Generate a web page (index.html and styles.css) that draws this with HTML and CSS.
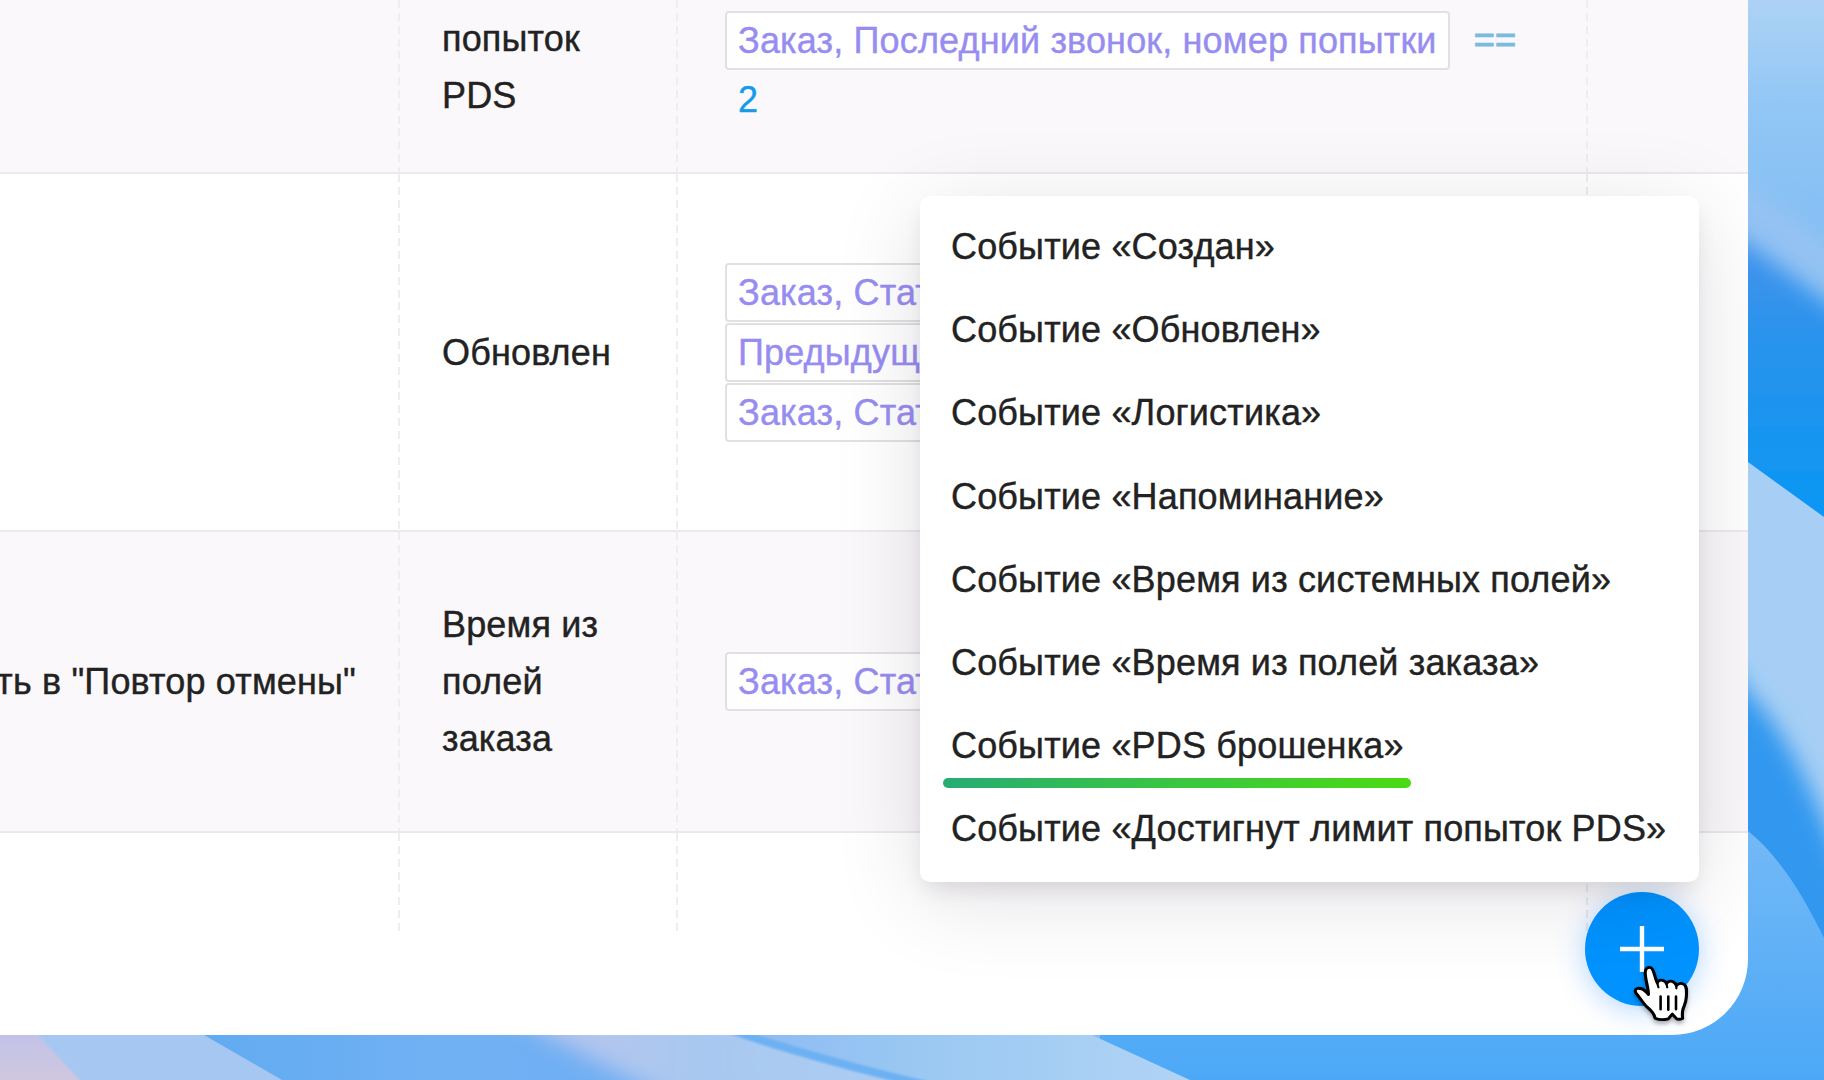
FILE: index.html
```
<!DOCTYPE html>
<html lang="ru">

<head>
    <meta charset="UTF-8" />
    <meta name="viewport" content="width=device-width, initial-scale=1.0" />
    <title>События</title>
    <link rel="stylesheet" href="styles.css">
</head>

<body>
    <svg class="wallpaper" viewBox="0 0 1824 1080" preserveAspectRatio="none">
        <defs>
            <linearGradient id="sky" x1="0" y1="0" x2="0" y2="1">
                <stop offset="0" stop-color="#add2f5" />
                <stop offset=".1" stop-color="#91c6f5" />
                <stop offset=".25" stop-color="#80bdf4" />
            </linearGradient>
            <linearGradient id="deep" gradientUnits="userSpaceOnUse" x1="0" y1="240" x2="0" y2="500">
                <stop offset="0" stop-color="#4593ec" />
                <stop offset=".35" stop-color="#2b93ec" />
                <stop offset="1" stop-color="#0c96f3" />
            </linearGradient>
            <linearGradient id="low" gradientUnits="userSpaceOnUse" x1="0" y1="830" x2="0" y2="1080">
                <stop offset="0" stop-color="#73b9f7" />
                <stop offset="1" stop-color="#4ca8f6" />
            </linearGradient>
            <linearGradient id="floor" gradientUnits="userSpaceOnUse" x1="200" y1="0" x2="600" y2="0">
                <stop offset="0" stop-color="#62abf1" />
                <stop offset=".6" stop-color="#70b1f3" />
                <stop offset="1" stop-color="#70aef3" />
            </linearGradient>
            <linearGradient id="mist" gradientUnits="userSpaceOnUse" x1="540" y1="0" x2="1180" y2="0">
                <stop offset="0" stop-color="#b9c5ec" />
                <stop offset=".25" stop-color="#a8c8f1" />
                <stop offset="1" stop-color="#b0d3f5" />
            </linearGradient>
            <linearGradient id="fold" gradientUnits="userSpaceOnUse" x1="740" y1="0" x2="1180" y2="0">
                <stop offset="0" stop-color="#8dbaf3" />
                <stop offset=".4" stop-color="#9ac8f2" />
                <stop offset="1" stop-color="#b0d3f5" />
            </linearGradient>
            <linearGradient id="blush" gradientUnits="userSpaceOnUse" x1="0" y1="1035" x2="0" y2="1080">
                <stop offset="0" stop-color="#c2c2e8" />
                <stop offset="1" stop-color="#cfc7de" />
            </linearGradient>
            <filter id="soft" x="-20%" y="-20%" width="140%" height="140%">
                <feGaussianBlur stdDeviation="11" />
            </filter>
            <filter id="edge">
                <feGaussianBlur stdDeviation="1.2" />
            </filter>
        </defs>
        <rect width="1824" height="1080" fill="url(#sky)" />
        <path d="M1700 150L1860 262V330L1700 200Z" fill="#94c2f3" filter="url(#soft)" />
        <path d="M1680 205L1748 245L1900 358V600H1680Z" fill="url(#deep)" filter="url(#soft)" />
        <path d="M1700 427L1748 462L1824 517V940H1700Z" fill="#a7cff5" />
        <path d="M1690 600L1748 692C1785 730 1805 775 1850 880V1000H1690Z" fill="#3298ef" filter="url(#soft)" />
        <path d="M1100 800L1748 831C1778 855 1802 893 1824 938V1080H1100Z" fill="url(#low)" />
        <!-- lower edge -->
        <rect y="1020" width="720" height="60" fill="url(#floor)" />
        <path d="M480 1000L690 1110H1000V1000Z" fill="url(#mist)" filter="url(#soft)" />
        <path d="M700 1020V1100H1000V1020Z" fill="url(#mist)" filter="url(#soft)" />
        <path d="M715 1020L740 1034C800 1056 850 1068 915 1080H1190L1092 1035L1070 1020Z" fill="url(#fold)" />
        <path d="M715 1024L745 1035C800 1053 850 1067 930 1086" fill="none" stroke="#6db1f3" stroke-width="8" filter="url(#edge)" />
        <path d="M0 1020H180L204 1035L282 1080H0Z" fill="#a5c7f2" />
        <path d="M-20 1020H24L38 1035L80 1080V1090H-20Z" fill="url(#blush)" filter="url(#edge)" />
    </svg>

    <main class="window">
        <div class="row odd first">
            <div class="cell"></div>
            <div class="cell">попыток<br>PDS</div>
            <div class="cell rules">
                <div><span class="tag">Заказ, Последний звонок, номер попытки</span> <span class="op">==</span></div>
                <div class="value">2</div>
            </div>
            <div class="cell"></div>
        </div>
        <div class="row second">
            <div class="cell"></div>
            <div class="cell">Обновлен</div>
            <div class="cell rules">
                <div><span class="tag">Заказ, Статус</span></div>
                <div><span class="tag">Предыдущий</span></div>
                <div><span class="tag">Заказ, Статус</span></div>
            </div>
            <div class="cell"></div>
        </div>
        <div class="row odd third">
            <div class="cell name">ть в "Повтор отмены"</div>
            <div class="cell">Время из<br>полей<br>заказа</div>
            <div class="cell rules">
                <div><span class="tag">Заказ, Статус</span></div>
            </div>
            <div class="cell"></div>
        </div>
        <div class="row last">
            <div class="cell"></div>
            <div class="cell"></div>
            <div class="cell"></div>
            <div class="cell"></div>
        </div>

        <button class="add" type="button" aria-label="Добавить">
            <svg width="46" height="46" viewBox="0 0 46 46">
                <path d="M23 0V46M1 23H45" stroke="#fff" stroke-width="4.4" />
            </svg>
        </button>

        <ul class="menu">
            <li>Событие «Создан»</li>
            <li>Событие «Обновлен»</li>
            <li>Событие «Логистика»</li>
            <li>Событие «Напоминание»</li>
            <li>Событие «Время из системных полей»</li>
            <li>Событие «Время из полей заказа»</li>
            <li><span class="marked">Событие «PDS брошенка»</span></li>
            <li>Событие «Достигнут лимит попыток PDS»</li>
        </ul>

        <svg class="cursor" width="66" height="63" viewBox="0 0 180 186" preserveAspectRatio="none">
            <path d="M63 157C60 143 52 134 43 126C30 114 23 98 12 85C7 78 8 71 15 69C24 67 33 73 39 80L45 87C44 64 36 42 36 22C36 10 44 5 51 8C60 11 62 38 69 53C71 45 79 43 86 46C91 48 93 51 94 55C98 48 106 46 113 50C118 53 120 56 121 61C126 55 134 53 140 56C151 61 149 79 148 96C147 113 142 119 139 131C137 139 137 148 138 158C131 161 123 160 120 157L110 145L99 159C88 162 73 162 63 157Z" fill="#fff" stroke="#000" stroke-width="8.5" stroke-linejoin="round" />
            <path d="M78 93V131M99 93V132M120 93V131" stroke="#000" stroke-width="7" stroke-linecap="round" />
            <path d="M69 53L72 66M94 55L96 66M121 61V69" fill="none" stroke="#000" stroke-width="6" stroke-linecap="round" />
        </svg>
    </main>
</body>

</html>
```

FILE: styles.css
```
* {
    box-sizing: border-box;
}

body {
    margin: 0;
    width: 1824px;
    height: 1080px;
    overflow: hidden;
    font-family: "Liberation Sans", Arial, sans-serif;
    font-size: 36px;
    line-height: 57px;
    letter-spacing: .16px;
    color: #222;
    -webkit-text-stroke: .4px;
}

.wallpaper {
    position: absolute;
    left: 0;
    top: 0;
    width: 1824px;
    height: 1080px;
}

.window {
    position: relative;
    width: 1748px;
    height: 1035px;
    background: #fff;
    border-radius: 0 0 76px 0;
    overflow: hidden;
}

.row {
    display: grid;
    grid-template-columns: 400px 278px 910px 1fr;
    border-bottom: 2px solid #ebe9eb;
}

.odd {
    background: #faf8fa;
}

.first {
    height: 174px;
}

.second {
    height: 358px;
}

.third {
    height: 301px;
}

.last {
    height: 99px;
    border-bottom: none;
}

.cell {
    display: flex;
    flex-direction: column;
    justify-content: center;
    padding: 0 42px;
    white-space: nowrap;
    background: repeating-linear-gradient(#efedef 0 8px, transparent 8px 12.85px) right top / 2px 100% no-repeat;
}

.cell:last-child {
    background: none;
}

.first .cell {
    justify-content: flex-end;
    padding-bottom: 48px;
}

.first .rules {
    padding-bottom: 42px;
}

.name {
    align-items: flex-end;
    padding-right: 44px;
}

.rules {
    padding: 0 47px;
    line-height: 60px;
    color: #978df0;
}

.rules > div {
    height: 60px;
}

.second .rules {
    padding-top: 2px;
}

.tag {
    display: inline-block;
    height: 59px;
    padding: 0 11px;
    line-height: 55px;
    vertical-align: top;
    background: #fff;
    border: 2px solid #e2e0e2;
    border-radius: 4px;
}

.first .tag {
    position: relative;
    top: 1px;
}

.op {
    margin-left: 14px;
    color: #7cbbe0;
    -webkit-text-stroke: 1.2px;
}

.value {
    padding-left: 13px;
    color: #169bea;
}

.menu {
    position: absolute;
    left: 920px;
    top: 196px;
    width: 779px;
    height: 686px;
    margin: 0;
    padding: 10px 0;
    list-style: none;
    background: #fff;
    border-radius: 10px;
    box-shadow: 0 12px 22px -6px rgba(30, 20, 40, .13), 0 16px 90px rgba(30, 20, 40, .12);
}

.menu li {
    height: 83.2px;
    padding-left: 31px;
    line-height: 82.6px;
    white-space: nowrap;
}

.marked {
    position: relative;
}

/* green marker under the item */
.marked::after {
    content: "";
    position: absolute;
    left: -8px;
    right: -7px;
    top: 53px;
    height: 10px;
    border-radius: 5px;
    background: linear-gradient(90deg, #26ac74, #38c445 45%, #4bdb12);
}

.add {
    position: absolute;
    left: 1585px;
    top: 892px;
    display: flex;
    align-items: center;
    justify-content: center;
    width: 114px;
    height: 114px;
    padding: 0;
    border: none;
    border-radius: 50%;
    background: #0093ff;
    box-shadow: 0 4px 30px rgba(0, 120, 255, .3);
}

.cursor {
    position: absolute;
    left: 1632px;
    top: 965px;
    filter: drop-shadow(0 3px 2px rgba(0, 0, 0, .3));
}
```
